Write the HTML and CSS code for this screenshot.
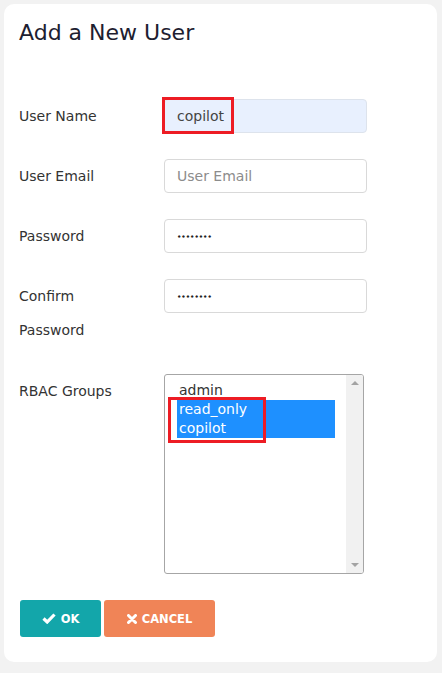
FILE: index.html
```html
<!DOCTYPE html>
<html>
<head>
<meta charset="utf-8">
<link rel="stylesheet" href="styles.css">
</head>
<body>
<div class="card">
  <h1 class="title">Add a New User</h1>
  <div class="form">
    <div class="label">User Name</div>
    <div class="field">
      <div class="input autofill">copilot</div>
      <div class="mark mark-name"></div>
    </div>

    <div class="label">User Email</div>
    <div class="field"><div class="input placeholder">User Email</div></div>

    <div class="label">Password</div>
    <div class="field"><div class="input"><span class="dots">••••••••</span></div></div>

    <div class="label">Confirm<br>Password</div>
    <div class="field"><div class="input"><span class="dots">••••••••</span></div></div>

    <div class="label groups-label">RBAC Groups</div>
    <div class="field groups-field">
      <div class="select">
        <div class="options">
          <div class="option">admin</div>
          <div class="option selected">read_only</div>
          <div class="option selected">copilot</div>
        </div>
        <div class="scrollbar">
          <span class="arrow up"></span>
          <span class="arrow down"></span>
        </div>
      </div>
      <div class="mark mark-groups"></div>
    </div>
  </div>
  <div class="buttons">
    <button class="btn ok">
      <svg width="14" height="11" viewBox="0 0 14 11"><polyline points="1.5,5.5 5.2,9 12.5,1.5" fill="none" stroke="#fff" stroke-width="3.2"/></svg>
      OK
    </button>
    <button class="btn cancel">
      <svg width="10" height="10" viewBox="0 0 10 10"><path d="M1.5 1.5 L8.5 8.5 M8.5 1.5 L1.5 8.5" stroke="#fff" stroke-width="3" stroke-linecap="round"/></svg>
      CANCEL
    </button>
  </div>
</div>
</body>
</html>
```
FILE: styles.css
```css
html, body {
  margin: 0;
  padding: 0;
}
body {
  background: #f2f2f2;
  font-family: "DejaVu Sans", "Noto Sans", sans-serif;
  color: #2b2b33;
  width: 442px;
  height: 673px;
  overflow: hidden;
}
.card {
  margin: 4px 5px 0 4px;
  height: 658px;
  background: #fff;
  border-radius: 10px;
  padding: 0 0 0 15px;
  box-sizing: border-box;
}
.title {
  margin: 0;
  padding-top: 16px;
  font-size: 22px;
  font-weight: normal;
  line-height: 26px;
  color: #1d2030;
  height: 95px;
  box-sizing: border-box;
}
.form {
  display: grid;
  grid-template-columns: 145px 203px;
  row-gap: 26px;
  align-items: start;
}
.label {
  font-size: 14px;
  line-height: 34px;
  color: #333;
}
.groups-label,
.groups-field {
  margin-top: 1px;
}
.field {
  position: relative;
}
.input {
  height: 34px;
  box-sizing: border-box;
  border: 1px solid #d9d9d9;
  border-radius: 4px;
  padding: 0 12px;
  font-size: 14px;
  line-height: 32px;
  color: #444;
}
.autofill {
  background: #e8f0fe;
  border-color: #dde3ec;
}
.placeholder {
  color: #8c8c8c;
}
.dots {
  font-size: 6.8px;
  letter-spacing: 0;
  color: #222;
  vertical-align: top;
  position: relative;
  top: 1px;
  font-weight: bold;
}
.select {
  width: 200px;
  height: 200px;
  box-sizing: border-box;
  border: 1px solid #a6a6a6;
  border-radius: 3px;
  display: flex;
  overflow: hidden;
}
.options {
  flex: 1;
  padding: 6px 11px 0 12px;
}
.option {
  font-size: 14px;
  line-height: 19px;
  height: 19px;
  padding-left: 2px;
  color: #333;
}
.option.selected {
  background: #1e90ff;
  color: #fff;
}
.scrollbar {
  width: 17px;
  background: #f1f1f1;
  display: flex;
  flex-direction: column;
  justify-content: space-between;
  align-items: center;
  padding: 6px 0;
  box-sizing: border-box;
}
.arrow {
  width: 0;
  height: 0;
  border-left: 4px solid transparent;
  border-right: 4px solid transparent;
}
.arrow.up {
  border-bottom: 4px solid #a3a3a3;
}
.arrow.down {
  border-top: 4px solid #a3a3a3;
}
.mark {
  position: absolute;
  border: 3px solid #ed1c24;
  box-sizing: border-box;
}
.mark-name {
  left: -2px;
  top: -2px;
  width: 72px;
  height: 37px;
}
.mark-groups {
  left: 4px;
  top: 23px;
  width: 98px;
  height: 46px;
}
.buttons {
  display: flex;
  gap: 3px;
  margin-top: 26px;
  padding-left: 1px;
}
.btn {
  height: 37px;
  border: none;
  border-radius: 3px;
  color: #fff;
  font-family: "DejaVu Sans", sans-serif;
  font-weight: bold;
  font-size: 11.5px;
  display: flex;
  align-items: center;
  justify-content: center;
  gap: 5px;
  padding: 0;
}
.ok {
  width: 81px;
  background: #13a6aa;
}
.cancel {
  width: 111px;
  background: #f08457;
}
```
